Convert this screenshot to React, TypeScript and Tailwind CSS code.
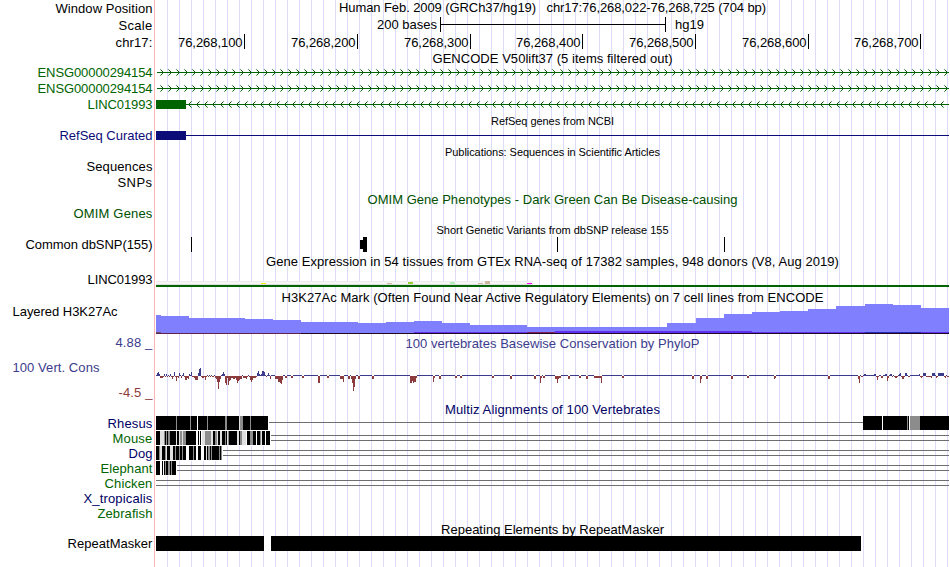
import { useLayoutEffect, useRef, useState, type ReactNode } from "react";

// Text whose letter spacing is adjusted so that it fills the given width.
function FitText({ text, width, className = "" }: { text: string; width: number; className?: string }) {
  const ref = useRef<HTMLSpanElement>(null);
  const [spacing, setSpacing] = useState(0);
  useLayoutEffect(() => {
    const el = ref.current;
    if (!el) return;
    el.style.letterSpacing = "0px";
    const natural = el.getBoundingClientRect().width;
    const next = (width - natural) / text.length;
    el.style.letterSpacing = `${next}px`;
    setSpacing(next);
  }, [text, width]);
  return (
    <span ref={ref} className={`inline-block whitespace-pre ${className}`} style={{ letterSpacing: `${spacing}px` }}>
      {text}
    </span>
  );
}

function Title({ text, width, className = "" }: { text: string; width: number; className?: string }) {
  return (
    <div className={`flex shrink-0 justify-center pl-[156px] ${className}`}>
      <FitText text={text} width={width} />
    </div>
  );
}

function Row({ label, width, className = "", labelClass = "", children }: {
  label: string; width: number; className?: string; labelClass?: string; children?: ReactNode;
}) {
  return (
    <div className={`flex shrink-0 ${className}`}>
      <div className={`mr-[3.5px] flex w-[152.5px] shrink-0 justify-end ${labelClass}`}>
        <FitText text={label} width={width} />
      </div>
      {children}
    </div>
  );
}

function Track({ h, children }: { h: number; children: ReactNode }) {
  return (
    <svg width={793} height={h} viewBox={`156 0 793 ${h}`} shapeRendering="crispEdges" className="block shrink-0">
      {children}
    </svg>
  );
}

function Arrows({ dir, start }: { dir: 1 | -1; start: number }) {
  const marks: ReactNode[] = [];
  for (let x = start; x < 951; x += 8) {
    for (let i = 1; i <= 3; i++) {
      const o = i === 3 ? 0.6 : 1;
      marks.push(<rect key={`${x}a${i}`} x={x - dir * (i - 1)} y={7 - i} width={1} height={1} fillOpacity={o} />);
      marks.push(<rect key={`${x}b${i}`} x={x - dir * (i - 1)} y={7 + i} width={1} height={1} fillOpacity={o} />);
    }
  }
  return (
    <g fill="#006400">
      {marks}
      <rect x={dir === 1 ? 157 : 186} y={7} width={793} height={1} />
    </g>
  );
}

const ticks: [number, string][] = [
  [244, "76,268,100"], [357, "76,268,200"], [470, "76,268,300"], [582, "76,268,400"],
  [695, "76,268,500"], [808, "76,268,600"], [920, "76,268,700"],
];

// [from, to, top] within the histone mark track
const h3k: number[][] = [
  [156, 161, 11], [161, 189, 12], [189, 245, 14], [245, 273, 15], [273, 301, 16], [301, 358, 18],
  [358, 386, 19], [386, 414, 18], [414, 442, 17], [442, 470, 19], [470, 527, 21], [527, 667, 23],
  [667, 696, 19], [696, 724, 14], [724, 752, 10], [752, 780, 8], [780, 808, 7], [808, 836, 5],
  [836, 865, 2], [865, 893, 0], [893, 921, 1], [921, 949, 4],
];

// [x, width, height]; positive values rise above the axis, negative ones fall below it
const cons: number[][] = [
  [156, 1, 1], [157, 1, 3], [158, 1, 4], [159, 1, 2], [160, 3, -2], [163, 1, -1], [164, 1, 2], [165, 1, -1], [166, 1, 2],
  [167, 1, -1], [168, 1, 1], [169, 1, -1], [170, 1, 2], [171, 1, -1], [172, 1, -3], [173, 1, -1], [174, 1, 4], [175, 1, -1],
  [176, 1, -5], [177, 1, -1], [178, 1, -2], [179, 1, 3], [180, 1, 1], [181, 1, -2], [182, 1, 1], [183, 1, 3], [184, 1, -1],
  [185, 2, -4], [187, 1, -2], [188, 1, -3], [189, 1, 2], [190, 1, 1], [191, 1, 4], [192, 2, -1], [194, 1, -2],
  [195, 3, -4], [198, 1, 3], [199, 1, 7], [200, 1, 8], [201, 1, -1], [202, 2, -2], [204, 1, -1], [205, 1, -4], [206, 1, -1],
  [207, 1, 1], [208, 1, -1], [209, 1, 1], [210, 1, -1], [211, 1, 1], [212, 2, -1], [214, 1, 1], [215, 1, -2],
  [216, 1, -3], [217, 1, -6], [218, 1, -13], [219, 1, -6], [220, 1, -3], [221, 1, 1], [222, 1, 2], [223, 1, 4], [224, 1, 2],
  [225, 1, -7], [226, 1, -9], [227, 1, -2], [228, 1, -9], [229, 1, -5], [230, 1, -4], [231, 2, -2], [233, 2, -3],
  [235, 1, -2], [236, 1, -4], [237, 1, -7], [238, 1, -5], [239, 1, -4], [240, 2, -3], [242, 1, 1], [243, 3, -2],
  [246, 1, -3], [247, 1, -1], [248, 1, 1], [249, 1, -1], [250, 1, -4], [251, 1, -6], [252, 1, -4], [253, 3, -2], [256, 1, -1],
  [257, 1, 3], [258, 1, 5], [259, 1, 2], [260, 1, 1], [261, 1, 2], [262, 2, 5], [264, 1, 4], [265, 1, 1], [266, 1, -1],
  [267, 1, 1], [268, 1, 3], [269, 1, 1], [270, 1, -3], [271, 4, 1], [275, 3, -3], [278, 1, -6], [279, 1, -6], [280, 1, -7],
  [281, 1, -8], [282, 1, -4], [285, 2, -2], [291, 2, -2], [302, 2, -2], [318, 2, -7], [327, 2, -2], [340, 3, -3],
  [343, 1, -6], [348, 2, -3], [351, 1, -3], [352, 1, -7], [353, 1, -15], [354, 1, -11], [355, 1, -3], [358, 2, -3],
  [372, 2, -3], [410, 2, -7], [412, 1, -5], [413, 1, -7], [414, 2, -6], [416, 1, -2], [433, 1, -6], [434, 1, -2],
  [439, 2, -3], [455, 2, -2], [460, 2, -2], [492, 2, -2], [510, 2, -3], [534, 2, -3], [540, 1, -7], [541, 1, -2],
  [543, 2, -2], [555, 2, -3], [557, 1, -7], [558, 1, -3], [559, 2, -2], [568, 2, -3], [579, 2, -2], [586, 2, -3],
  [594, 7, -2], [601, 1, -7], [622, 2, -2], [692, 2, -3], [700, 1, -7], [701, 1, -3], [706, 2, -3], [731, 2, -3],
  [747, 2, -2], [774, 1, -3], [775, 1, -2], [828, 2, -3], [858, 1, -3], [859, 1, -7], [861, 2, -1], [864, 2, 2],
  [874, 2, 2], [876, 1, -1], [877, 1, -4], [878, 1, -1], [881, 2, -2], [885, 2, 2], [887, 1, -5], [888, 1, -2], [890, 2, 2],
  [892, 1, -1], [894, 1, -1], [895, 2, -2], [897, 1, -1], [899, 1, 2], [900, 1, 3], [901, 1, -1], [902, 2, -3], [904, 1, -1],
  [905, 2, 3], [908, 2, -1], [919, 1, 2], [920, 1, -1], [921, 1, -2], [922, 1, -1], [923, 3, 3], [926, 5, -1], [931, 1, -2],
  [932, 3, 3], [936, 1, -2], [937, 1, -1], [938, 6, 3], [944, 1, -1], [945, 1, -2], [947, 2, -1],
];

function Conservation() {
  const marked = new Set<number>();
  cons.forEach(([x, w]) => { for (let i = 0; i < w; i++) marked.add(x + i); });
  const axis: ReactNode[] = [];
  for (let x = 156; x < 949; x++) {
    if (!marked.has(x)) axis.push(<rect key={x} x={x} y={24} width={1} height={1} fill="#3c3c8c" />);
  }
  return (
    <Track h={50}>
      {axis}
      {cons.map(([x, w, v]) => (
        <rect key={`c${x}`} x={x} y={v > 0 ? 25 - v : 25} width={w} height={Math.abs(v)} fill={v > 0 ? "#3c3c8c" : "#8c3c3c"} />
      ))}
    </Track>
  );
}

const G = "#8c8c8c";
const L = "#e0e0e0";
const K = "#000000";
const W = "#ffffff";
type Band = [number, number, string];

const rhesus: Band[] = [
  [156, 112, K], [176, 1, G], [190, 1, G], [197, 1, W], [207, 1, G], [225, 2, G], [239, 1, L], [240, 3, G], [250, 1, G],
  [863, 86, K], [882, 1, W], [907, 1, G], [909, 1, W], [910, 10, G],
];
const mouse: Band[] = [
  [156, 114, K], [160, 4, L], [164, 1, G], [166, 1, G], [168, 2, G], [176, 1, L], [179, 1, L], [180, 2, G], [182, 1, L],
  [183, 3, G], [196, 2, W], [199, 1, W], [201, 1, W], [202, 3, L], [205, 6, G], [211, 2, L], [215, 2, G], [217, 1, L],
  [220, 2, L], [225, 1, G], [227, 1, L], [228, 1, G], [237, 2, L], [240, 2, G], [242, 4, L], [246, 1, W], [250, 3, G],
  [256, 1, W], [260, 1, G], [261, 1, L], [265, 1, W],
];
const dog: Band[] = [
  [156, 66, K], [159, 1, G], [160, 2, L], [165, 1, G], [166, 1, L], [170, 3, L], [175, 1, G], [179, 1, G], [182, 1, G],
  [186, 3, W], [193, 1, G], [196, 2, W], [201, 3, W], [206, 1, L], [208, 2, G], [211, 1, G], [219, 1, G], [221, 1, G],
];
const elephant: Band[] = [
  [156, 20, K], [160, 2, W], [163, 1, W], [165, 1, G], [168, 2, G], [171, 1, G],
];

function Alignment({ bands = [], lines, from }: { bands?: Band[]; lines: number[]; from: number }) {
  return (
    <Track h={15}>
      {bands.length > 0 && <rect x={156} y={0} width={from - 156} height={15} fill="#ffffff" />}
      {lines.map((y) => <rect key={y} x={from} y={y} width={949 - from} height={1} fill="#6e6e6e" />)}
      {bands.map(([x, w, c], i) => <rect key={i} x={x} y={0} width={w} height={14} fill={c} />)}
    </Track>
  );
}

export default function App() {
  return (
    <main className="h-[567px] w-[950px] overflow-hidden bg-white">
      <div className="flex h-[567px] w-[949px] flex-col overflow-hidden bg-[linear-gradient(90deg,white_154px,#ffb4b4_154px,#ffb4b4_155px,white_155px,white_166px,transparent_166px),repeating-linear-gradient(90deg,white_0px,white_11px,#dcdcfa_11px,#dcdcfa_12px)] font-['Liberation_Sans',Arial,sans-serif] text-[13px] leading-[15px] text-black">
        <div className="flex h-[17px] shrink-0">
          <div className="mr-[3.5px] flex w-[152.5px] justify-end pt-px"><FitText text="Window Position" width={97} /></div>
          <div className="flex flex-1 justify-center"><FitText text="Human Feb. 2009 (GRCh37/hg19)   chr17:76,268,022-76,268,725 (704 bp)" width={427} /></div>
        </div>
        <Row label="Scale" width={34} className="h-[17px]" labelClass="pt-px">
          <div className="flex w-[284px] justify-end pr-[3px]"><FitText text="200 bases" width={60} /></div>
          <div className="mr-[9px] flex h-[15px] w-[226px] items-center border-x border-black"><div className="h-px w-full bg-black" /></div>
          <FitText text="hg19" width={29} />
        </Row>
        <Row label="chr17:" width={37} className="h-[17px]" labelClass="pt-px">
          <div className="flex">
            {ticks.map(([x, text], i) => (
              <div key={text} className="flex h-[15px] justify-end border-r border-black pt-px pr-[1.5px]" style={{ width: x + 1 - (i ? ticks[i - 1][0] + 1 : 156) }}>
                <FitText text={text} width={64.5} />
              </div>
            ))}
          </div>
        </Row>
        <Title text="GENCODE V50lift37 (5 items filtered out)" width={240} className="h-[14px]" />
        <Row label="ENSG00000294154" width={115} className="h-4" labelClass="text-[#006400]"><Track h={16}><Arrows dir={1} start={162} /></Track></Row>
        <Row label="ENSG00000294154" width={115} className="h-4" labelClass="text-[#006400]"><Track h={16}><Arrows dir={1} start={162} /></Track></Row>
        <Row label="LINC01993" width={65} className="h-4" labelClass="text-[#006400]">
          <Track h={16}><Arrows dir={-1} start={189} /><rect x={156} y={3} width={30} height={9} fill="#006400" /></Track>
        </Row>
        <Title text="RefSeq genes from NCBI" width={123} className="h-[15px] pt-px text-[11px]" />
        <Row label="RefSeq Curated" width={93} className="h-4" labelClass="text-[#0c0c78]">
          <Track h={16}><rect x={156} y={7} width={793} height={1} fill="#0c0c78" /><rect x={156} y={3} width={30} height={9} fill="#0c0c78" /></Track>
        </Row>
        <Title text="Publications: Sequences in Scientific Articles" width={215} className="h-[15px] pt-px text-[11px]" />
        <Row label="Sequences" width={66} className="h-4" />
        <Row label="SNPs" width={35} className="h-[17px]" />
        <Title text="OMIM Gene Phenotypes - Dark Green Can Be Disease-causing" width={370} className="h-[14px] text-[#005000]" />
        <Row label="OMIM Genes" width={79} className="h-4" labelClass="text-[#005000]" />
        <Title text="Short Genetic Variants from dbSNP release 155" width={232} className="h-[15px] pt-px text-[11px]" />
        <Row label="Common dbSNP(155)" width={127} className="h-[17px]">
          <Track h={17}>
            {[191, 557, 724].map((x) => <rect key={x} x={x} y={0} width={1} height={15} />)}
            <rect x={360} y={3} width={3} height={9} />
            <rect x={363} y={0} width={4} height={15} />
          </Track>
        </Row>
        <Title text="Gene Expression in 54 tissues from GTEx RNA-seq of 17382 samples, 948 donors (V8, Aug 2019)" width={573} className="h-[18px]" />
        <Row label="LINC01993" width={65} className="h-[18px]">
          <Track h={18}>
            <rect x={156} y={9} width={377} height={4} fill="#f6f6f6" />
            <rect x={156} y={9} width={377} height={1} fill="#ececec" />
            <rect x={156} y={12} width={377} height={1} fill="#dedede" />
            <rect x={261} y={11} width={5} height={1} fill="#eeee00" />
            <rect x={387} y={11} width={5} height={1} fill="#cdb79e" />
            <rect x={408} y={10} width={5} height={2} fill="#9acd32" />
            <rect x={450} y={10} width={5} height={2} fill="#b4eeb4" />
            <rect x={478} y={11} width={5} height={1} fill="#cdb79e" />
            <rect x={485} y={9} width={5} height={3} fill="#cdb79e" />
            <rect x={527} y={11} width={5} height={1} fill="#ff00ff" />
            <rect x={156} y={13} width={793} height={2} fill="#006400" />
          </Track>
        </Row>
        <Title text="H3K27Ac Mark (Often Found Near Active Regulatory Elements) on 7 cell lines from ENCODE" width={542} className="h-[14px]" />
        <div className="flex h-[31px] shrink-0">
          <div className="w-[156px] shrink-0 pl-[12.5px]"><FitText text="Layered H3K27Ac" width={105} /></div>
          <Track h={31}>
            {h3k.map(([a, b, y]) => <rect key={a} x={a} y={y} width={b - a} height={29 - y} fill="#8080ff" />)}
            <rect x={414} y={28} width={113} height={1} fill="#6030f0" />
            <rect x={527} y={28} width={28} height={1} fill="#802060" />
            <rect x={555} y={27} width={197} height={2} fill="#6030f0" />
            <rect x={752} y={28} width={197} height={1} fill="#6030f0" />
            <rect x={865} y={28} width={56} height={1} fill="#2828b4" />
            <rect x={156} y={28} width={5} height={1} fill="#705070" />
            <rect x={156} y={29} width={145} height={1} fill="#602050" />
            <rect x={301} y={29} width={648} height={1} fill="#200820" />
          </Track>
        </div>
        <div className="flex h-[67px] shrink-0 text-[#3c3c8c]">
          <div className="mr-[3.5px] flex w-[152.5px] shrink-0 flex-col items-end">
            <FitText text="4.88 _" width={37} className="mb-[10px]" />
            <div className="mb-[10px] w-full pl-[12.5px]"><FitText text="100 Vert. Cons" width={87} /></div>
            <FitText text="-4.5 _" width={34} className="text-[#8c3c3c]" />
          </div>
          <div className="flex flex-col items-center">
            <div className="h-4 pt-px"><FitText text="100 vertebrates Basewise Conservation by PhyloP" width={294} /></div>
            <Conservation />
          </div>
        </div>
        <Title text="Multiz Alignments of 100 Vertebrates" width={215} className="h-[14px] text-[#000064]" />
        <Row label="Rhesus" width={45} className="h-[15px]" labelClass="text-[#000064]"><Alignment bands={rhesus} lines={[6]} from={269} /></Row>
        <Row label="Mouse" width={40} className="h-[15px]" labelClass="text-[#006400]"><Alignment bands={mouse} lines={[4, 9]} from={271} /></Row>
        <Row label="Dog" width={24} className="h-[15px]" labelClass="text-[#000064]"><Alignment bands={dog} lines={[4, 9]} from={223} /></Row>
        <Row label="Elephant" width={52} className="h-[15px]" labelClass="text-[#006400]"><Alignment bands={elephant} lines={[4, 9]} from={177} /></Row>
        <Row label="Chicken" width={48} className="h-[15px]" labelClass="text-[#006400]"><Alignment lines={[4, 9]} from={156} /></Row>
        <Row label="X_tropicalis" width={69} className="h-[15px]" labelClass="text-[#000064]" />
        <Row label="Zebrafish" width={55} className="h-[15px]" labelClass="text-[#006400]" />
        <Title text="Repeating Elements by RepeatMasker" width={223} className="h-[15px] pt-px" />
        <Row label="RepeatMasker" width={85} className="relative h-[15px]">
          <Track h={15}><rect x={156} y={0} width={108} height={15} /><rect x={271} y={0} width={590} height={15} /></Track>
        </Row>
      </div>
    </main>
  );
}
